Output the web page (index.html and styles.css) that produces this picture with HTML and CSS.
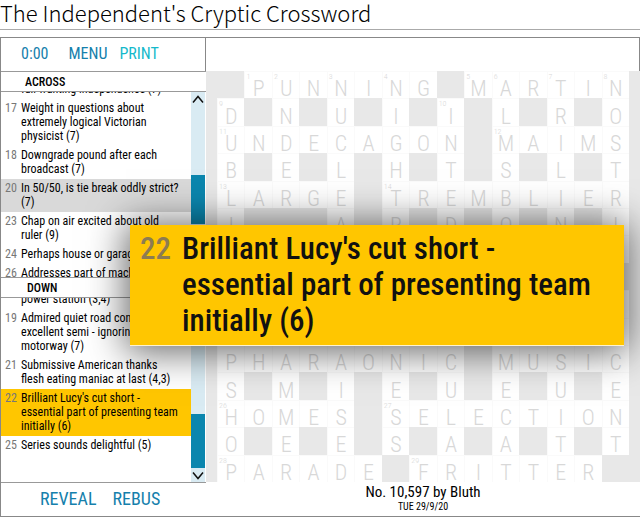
FILE: index.html
```html
<!DOCTYPE html>
<html lang="en">
<head>
<meta charset="utf-8">
<title>The Independent's Cryptic Crossword</title>
<link rel="stylesheet" href="styles.css">
</head>
<body>
<h1 class="page-title">The Independent's Cryptic Crossword</h1>
<main class="app">
  <section class="side">
    <div class="toolbar">
      <span class="timer">0:00</span>
      <button class="link menu" type="button">MENU</button>
      <button class="link print" type="button">PRINT</button>
    </div>
    <h2 class="heading">ACROSS</h2>
    <div class="clues">
      <ul class="list across">
        <li class="clue"><span class="num"></span><span>full wanting independence (7)</span></li>
        <li class="clue"><span class="num">17</span><span>Weight in questions about<br>extremely logical Victorian<br>physicist (7)</span></li>
        <li class="clue"><span class="num">18</span><span>Downgrade pound after each<br>broadcast (7)</span></li>
        <li class="clue related"><span class="num">20</span><span>In 50/50, is tie break oddly strict?<br>(7)</span></li>
        <li class="clue"><span class="num">23</span><span>Chap on air excited about old<br>ruler (9)</span></li>
        <li class="clue"><span class="num">24</span><span>Perhaps house or garage</span></li>
        <li class="clue"><span class="num">26</span><span>Addresses part of mach</span></li>
      </ul>
      <div class="scroll">
        <button class="arrow" type="button" aria-label="Scroll up"><svg viewBox="0 0 14 14"><path d="M2 10.5 7 4.5l5 6"/></svg></button>
        <div class="track track-across"><div class="thumb"></div></div>
      </div>
    </div>
    <h2 class="heading down">DOWN</h2>
    <div class="clues">
      <ul class="list downs">
        <li class="clue"><span class="num"></span><span>power station (3,4)</span></li>
        <li class="clue"><span class="num">19</span><span>Admired quiet road con<br>excellent semi - ignoring<br>motorway (7)</span></li>
        <li class="clue"><span class="num">21</span><span>Submissive American thanks<br>flesh eating maniac at last (4,3)</span></li>
        <li class="clue current"><span class="num">22</span><span>Brilliant Lucy's cut short -<br>essential part of presenting team<br>initially (6)</span></li>
        <li class="clue"><span class="num">25</span><span>Series sounds delightful (5)</span></li>
      </ul>
      <div class="scroll">
        <div class="track track-down"><div class="thumb"></div></div>
        <button class="arrow" type="button" aria-label="Scroll down"><svg viewBox="0 0 14 14"><path d="M2 4.5 7 10.5l5-6"/></svg></button>
      </div>
    </div>
    <div class="actions">
      <button class="link" type="button">REVEAL</button>
      <button class="link" type="button">REBUS</button>
    </div>
  </section>
  <section class="puzzle">
    <div class="banner"></div>
    <div class="board" id="board"></div>
    <footer class="credit"><div>No. 10,597 by Bluth</div><div class="date">TUE 29/9/20</div></footer>
  </section>
</main>
<aside class="popup"><span class="popup-num">22</span><p class="popup-text">Brilliant Lucy's cut short -<br>essential part of presenting team<br>initially (6)</p></aside>
<script src="board.js"></script>
</body>
</html>
```
FILE: styles.css
```css
* { box-sizing: border-box; }
body {
  margin: 0;
  height: 100vh;
  display: flex;
  flex-direction: column;
  position: relative;
  overflow: hidden;
  background: #fff;
  color: #111;
  font-family: "Roboto Condensed", "Liberation Sans Narrow", Roboto, sans-serif;
  font-size: 12px;
  line-height: 14px;
}
.page-title {
  margin: 0 0 7px;
  height: 30px;
  flex: none;
  border-bottom: 1px solid #aaa;
  font: 300 22px/24px "Noto Sans CJK JP", "Noto Sans", sans-serif;
  color: #000;
}
.app {
  flex: 1;
  min-height: 0;
  display: grid;
  grid-template-columns: 206px 1fr;
  border: 1px solid #888;
  border-width: 1px 0;
}
.side, .puzzle { display: flex; flex-direction: column; min-height: 0; min-width: 0; }
.side { border-left: 1px solid #888; }
.toolbar {
  height: 33px;
  flex: none;
  display: flex;
  align-items: center;
  padding: 0 0 2px 20px;
  border-right: 1px solid #888;
  font-size: 16px;
  color: #1580ac;
}
.link { border: 0; padding: 0; background: none; font: inherit; color: #1580ac; cursor: pointer; }
.menu { margin-left: 20px; }
.print { margin-left: 12px; color: #14b9cb; }
.heading {
  margin: 0;
  height: 21px;
  flex: none;
  padding-left: 24px;
  border: 1px solid #999;
  border-width: 1px 0;
  font-size: 12px;
  line-height: 20px;
  font-weight: 500;
  color: #000;
}
.down { padding-left: 26px; }
.clues { flex: 1; min-height: 0; display: flex; overflow: hidden; }
.list { flex: 1; margin: 0; padding: 0; list-style: none; white-space: nowrap; color: #000; }
.across { margin-top: -12px; }
.downs { margin-top: -8px; }
.clue { display: grid; grid-template-columns: 16px 1fr; padding: 2px 0 3px 4px; }
.num { color: #777; }
.related { background: #d9d9d9; }
.current { background: #ffc600; }
.scroll { width: 14px; margin-right: 1px; display: flex; flex-direction: column; background: #d9ebf3; }
.arrow { height: 14px; border: 0; padding: 0; background: none; }
.arrow svg { display: block; width: 14px; height: 14px; fill: none; stroke: #111; stroke-width: 1.5; }
.track { flex: 1; display: grid; }
.track-across { grid-template-rows: 69fr 49fr 53fr; }
.track-down { grid-template-rows: 117fr 54fr; }
.thumb { grid-row: 2; background: #0b86ae; }
.actions {
  height: 34px;
  flex: none;
  display: flex;
  align-items: center;
  gap: 16px;
  padding: 0 0 2px 39px;
  border-top: 1px solid #999;
  font-size: 18px;
  line-height: 20px;
}
.banner { height: 33px; flex: none; border-right: 1px solid #888; }
.board {
  flex: 1;
  min-height: 0;
  display: grid;
  grid-template: repeat(15, 1fr) / repeat(15, 1fr);
  padding: 0 11px;
  background: #e8e8e8;
}
.cell {
  min-width: 0;
  min-height: 0;
  display: flex;
  align-items: center;
  justify-content: center;
  position: relative;
  padding: 8px 0 0 1px;
  background: #fff;
  box-shadow: inset 1px 1px #fafafa;
  color: #d8d8d8;
  font-size: 22px;
  line-height: 19px;
  font-weight: 300;
}
.block { background: #e8e8e8; box-shadow: none; }
.mark { position: absolute; left: 2px; top: 2px; font-size: 8px; line-height: 8px; }
.credit { height: 34px; flex: none; padding-top: 2px; text-align: center; font-size: 15px; line-height: 16px; color: #000; }
.date { font-size: 10px; line-height: 14px; }
.popup {
  position: absolute;
  left: 130px;
  top: 225px;
  right: 16px;
  display: grid;
  grid-template-columns: 42px 1fr;
  padding: 6px 0 6px 10px;
  border-bottom: 1px solid #fff3cd;
  background: #ffc600;
  box-shadow: 0 2px 36px 4px rgba(0, 0, 0, .6);
  font-size: 31px;
  line-height: 36px;
  font-weight: 500;
  white-space: nowrap;
}
.popup-num { color: #8d7c52; }
.popup-text { margin: 0; }
```
FILE: board.js
```javascript
// "#" is a blocked square, a space is an empty square.
const rows = [
  "#PUNNING#MARTIN",
  "D#N#U#I#I#L#R#O",
  "UNDECAGON#MAIMS",
  "B#E#L#H#T#S#L#T",
  "LARGE#TREMBLIER",
  "I###A#R#D#O#N#I",
  "               ",
  "              #",
  "               ",
  "               ",
  "PHARAONIC#MUSIC",
  "S#M#I#E#U#E#U#E",
  "HOMES#SELECTION",
  "O#E#E#S#A#A#T#T",
  "PARADE#FRITTER#"
];
const marks = {
  "0,1": 1, "0,2": 2, "0,4": 3, "0,6": 4, "0,9": 5, "0,10": 6, "0,12": 7, "0,14": 8,
  "1,0": 9, "1,8": 10, "2,0": 11, "2,10": 12, "4,0": 13, "4,6": 14,
  "12,0": 26, "12,6": 27, "14,0": 28, "14,7": 29
};
const board = document.getElementById("board");
rows.forEach((row, r) => [...row].forEach((letter, c) => {
  const cell = document.createElement("div");
  cell.className = letter === "#" ? "cell block" : "cell";
  if (letter !== "#") cell.textContent = letter.trim();
  const mark = marks[r + "," + c];
  if (mark) {
    const label = document.createElement("span");
    label.className = "mark";
    label.textContent = mark;
    cell.append(label);
  }
  board.append(cell);
}));
```
